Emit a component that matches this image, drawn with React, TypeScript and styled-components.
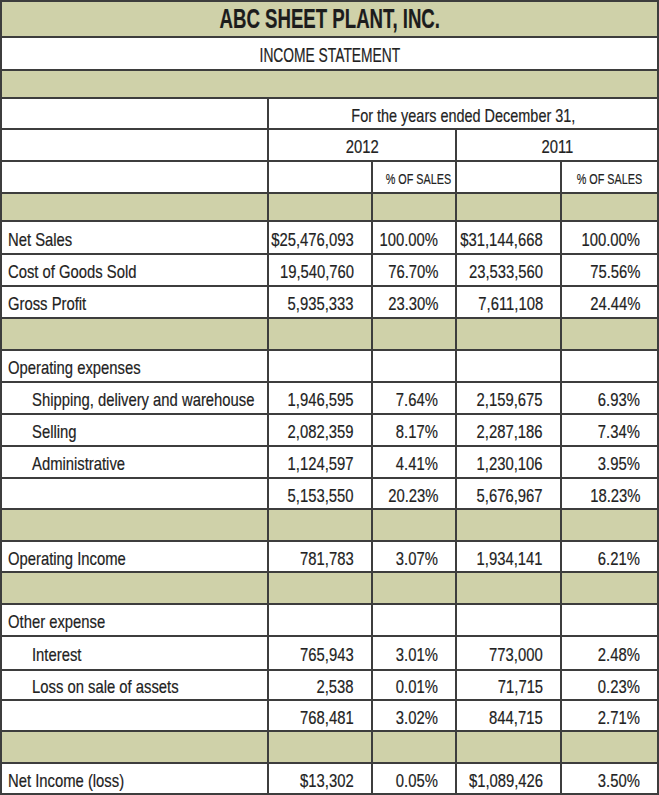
import React from "react";
import styled, { createGlobalStyle } from "styled-components";

const GlobalStyle = createGlobalStyle`
  html, body {
    margin: 0;
    padding: 0;
    background: #ffffff;
  }
  body {
    font-family: "Liberation Sans", Arial, sans-serif;
    color: #222222;
  }
`;

type Line = {
  label?: string;
  indent?: boolean;
  h: number;
  tan?: boolean;
  values?: [string, string, string, string];
};

const lines: Line[] = [
  { tan: true, h: 28 },
  { label: "Net Sales", h: 33, values: ["$25,476,093", "100.00%", "$31,144,668", "100.00%"] },
  { label: "Cost of Goods Sold", h: 32, values: ["19,540,760", "76.70%", "23,533,560", "75.56%"] },
  { label: "Gross Profit", h: 32, values: ["5,935,333", "23.30%", "7,611,108", "24.44%"] },
  { tan: true, h: 32 },
  { label: "Operating expenses", h: 32 },
  { label: "Shipping, delivery and warehouse", indent: true, h: 32, values: ["1,946,595", "7.64%", "2,159,675", "6.93%"] },
  { label: "Selling", indent: true, h: 32, values: ["2,082,359", "8.17%", "2,287,186", "7.34%"] },
  { label: "Administrative", indent: true, h: 32, values: ["1,124,597", "4.41%", "1,230,106", "3.95%"] },
  { h: 31, values: ["5,153,550", "20.23%", "5,676,967", "18.23%"] },
  { tan: true, h: 32 },
  { label: "Operating Income", h: 31, values: ["781,783", "3.07%", "1,934,141", "6.21%"] },
  { tan: true, h: 32 },
  { label: "Other expense", h: 32 },
  { label: "Interest", indent: true, h: 34, values: ["765,943", "3.01%", "773,000", "2.48%"] },
  { label: "Loss on sale of assets", indent: true, h: 30, values: ["2,538", "0.01%", "71,715", "0.23%"] },
  { h: 31, values: ["768,481", "3.02%", "844,715", "2.71%"] },
  { tan: true, h: 32 },
  { label: "Net Income (loss)", h: 31, values: ["$13,302", "0.05%", "$1,089,426", "3.50%"] },
];

export default function App() {
  return (
    <>
      <GlobalStyle />
      <Sheet>
        <colgroup>
          <col style={{ width: 267 }} />
          <col style={{ width: 104 }} />
          <col style={{ width: 84 }} />
          <col style={{ width: 105 }} />
          <col style={{ width: 97 }} />
        </colgroup>
        <tbody>
          <Row $h={36} $tan>
            <Title colSpan={5}>
              <Narrow $scale={0.69}>ABC SHEET PLANT, INC.</Narrow>
            </Title>
          </Row>
          <Row $h={33}>
            <Subtitle colSpan={5}>
              <Narrow $scale={0.69}>INCOME STATEMENT</Narrow>
            </Subtitle>
          </Row>
          <Row $h={28} $tan>
            <Cell colSpan={5} />
          </Row>
          <Row $h={31}>
            <Cell />
            <Center colSpan={4}>
              <Narrow $scale={0.76}>For the years ended December 31,</Narrow>
            </Center>
          </Row>
          <Row $h={32}>
            <Cell />
            <Center colSpan={2}>
              <Narrow>2012</Narrow>
            </Center>
            <Center colSpan={2}>
              <Narrow>2011</Narrow>
            </Center>
          </Row>
          <Row $h={32}>
            <Cell />
            <Cell />
            <Small>
              <Narrow $scale={0.72}>% OF SALES</Narrow>
            </Small>
            <Cell />
            <Small>
              <Narrow $scale={0.72}>% OF SALES</Narrow>
            </Small>
          </Row>
          {lines.map((l, i) => (
            <Row key={i} $h={l.h} $tan={l.tan}>
              <Label $indent={l.indent}>
                {l.label && <Narrow $origin="left">{l.label}</Narrow>}
              </Label>
              {[0, 1, 2, 3].map((c) => (
                <Num key={c}>
                  {l.values && (
                    <RightBox>
                      <Narrow $origin="right">{l.values[c]}</Narrow>
                    </RightBox>
                  )}
                </Num>
              ))}
            </Row>
          ))}
        </tbody>
      </Sheet>
    </>
  );
}

const Sheet = styled.table`
  width: 657px;
  border-collapse: collapse;
  table-layout: fixed;
  font-size: 19px;
`;

const Row = styled.tr<{ $h: number; $tan?: boolean }>`
  height: ${(p) => p.$h}px;
  background: ${(p) => (p.$tan ? "#cfd1a9" : "#ffffff")};
`;

const Cell = styled.td`
  border: 2px solid #3d3d3d;
  padding: 3px 0 0;
  white-space: nowrap;
  line-height: 1;
  overflow: visible;
`;

// the reference uses a condensed face; squeeze a regular one horizontally
const Narrow = styled.span<{ $scale?: number; $origin?: string }>`
  display: inline-block;
  flex: none;
  transform: scaleX(${(p) => p.$scale ?? 0.78});
  transform-origin: ${(p) => p.$origin ?? "center"} center;
  -webkit-text-stroke: 0.2px currentColor;
`;

// right-aligned content that overflows to the left, so the squeeze anchors at the right edge
const RightBox = styled.div`
  display: flex;
  justify-content: flex-end;
`;

const Title = styled(Cell)`
  text-align: center;
  font-weight: 700;
  font-size: 27px;
  color: #1c1c1c;
  padding-top: 1px;
`;

const Subtitle = styled(Cell)`
  text-align: center;
  font-size: 20px;
`;

const Center = styled(Cell)`
  text-align: center;
`;

const Small = styled(Cell)`
  text-align: center;
  font-size: 15px;
`;

const Label = styled(Cell)<{ $indent?: boolean }>`
  padding-left: ${(p) => (p.$indent ? 30 : 6)}px;
`;

const Num = styled(Cell)`
  padding-right: 17px;
`;
